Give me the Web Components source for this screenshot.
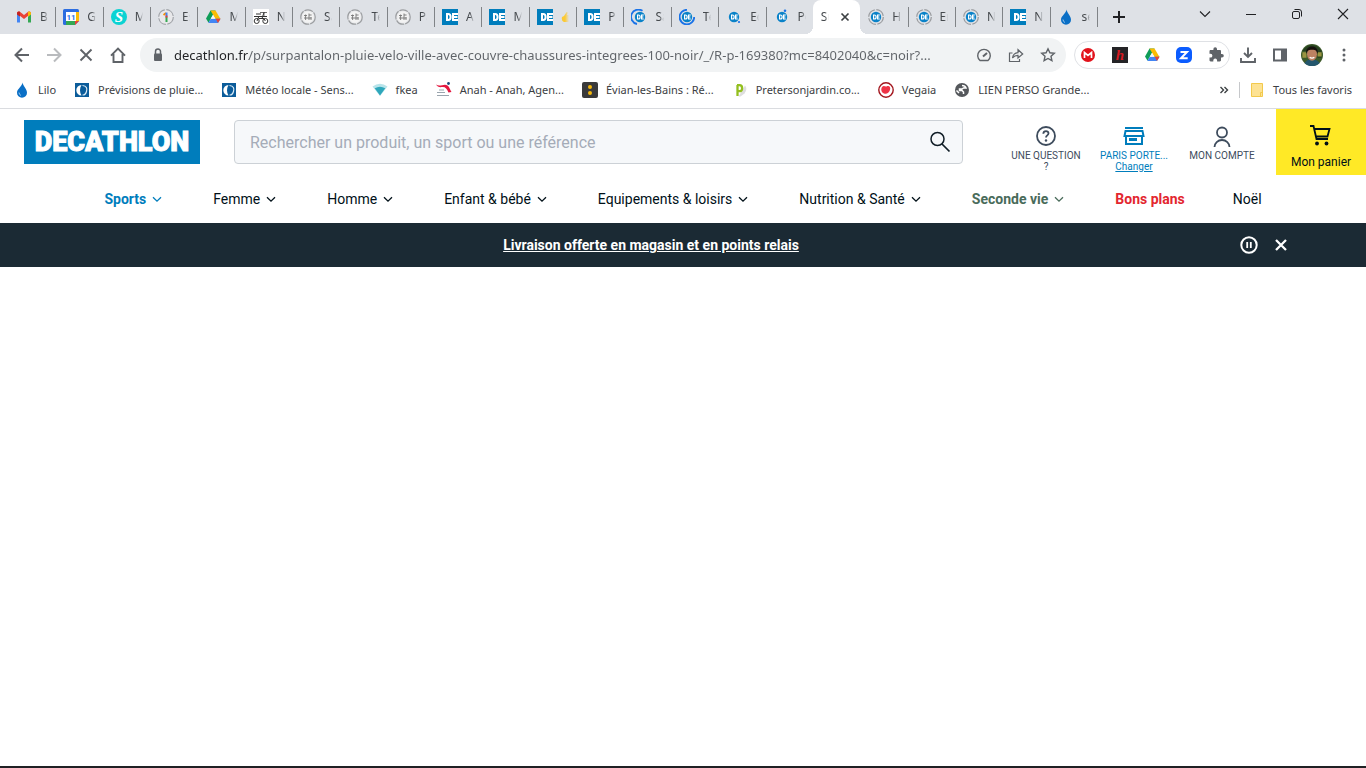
<!DOCTYPE html>
<html lang="fr">
<head>
<meta charset="utf-8">
<meta name="viewport" content="width=device-width, initial-scale=1">
<title>Surpantalon pluie vélo - Decathlon</title>
<style>
html, body{
	margin: 0;
	height: 100%;
}

body{
	display: flex;
	flex-direction: column;
	box-sizing: border-box;
	min-height: 100vh;
	background-color: #fff;
	border-bottom: 2px solid #202124;
	font-family: 'Roboto', sans-serif;
	color: #001018;
}

main{
	flex: 1;
}
</style>
</head>
<body>

<template id='tab-strip-template'>
<style>
:host{
	display: flex;
	height: 34px;
	padding-left: 8px;
	background-color: #dee1e6;
	font-family: 'Noto Sans', sans-serif;
}

.tabs{
	display: flex;
	flex: 1;
	min-width: 0;
}

.new{
	align-self: center;
	height: 28px;
	width: 28px;
	margin: 0 49px 0 8px;
}

.win{
	width: 46px;
	height: 28px;
}

button{
	display: flex;
	flex: none;
	align-items: center;
	justify-content: center;
	padding: 0;
	border: none;
	background: none;
	color: #202124;
}
</style>
<div class='tabs' role='tablist'><slot></slot></div>
<button class='new' aria-label='Nouvel onglet'><ui-icon name='plus'></ui-icon></button>
<button class='win' aria-label='Rechercher dans les onglets'><ui-icon name='tabsearch'></ui-icon></button>
<button class='win' aria-label='Réduire'><ui-icon name='minimize'></ui-icon></button>
<button class='win' aria-label='Restaurer'><ui-icon name='restore'></ui-icon></button>
<button class='win' aria-label='Fermer'><ui-icon name='winclose'></ui-icon></button>
</template>

<template id='browser-tab-template'>
<style>
:host{
	display: flex;
	flex: 1 1 0;
	align-items: center;
	box-sizing: border-box;
	min-width: 0;
	position: relative;
	padding: 0 7px 0 8px;
	gap: 8px;
	font-size: 12px;
	line-height: 16px;
	color: #45494d;
}

/* separator on the right of each idle tab */
:host::after{
	content: '';
	position: absolute;
	right: -1px;
	top: 7px;
	width: 1px;
	height: 20px;
	background-color: #808387;
}

:host([plain])::after, :host([active])::after{
	display: none;
}

.label{
	flex: 1;
	min-width: 0;
	overflow: hidden;
	white-space: nowrap;
	-webkit-mask-image: linear-gradient(to right, #000 50%, transparent);
	mask-image: linear-gradient(to right, #000 50%, transparent);
}

button{
	display: none;
	padding: 0;
	border: none;
	background: none;
	color: #3c4043;
}

:host([active]){
	background-color: #fff;
	border-radius: 8px 8px 0 0;
}

:host([active]) button{
	display: flex;
}

:host([active]) ui-icon.fav{
	display: none;
}

/* curved feet of the active tab */
.foot{
	display: none;
	position: absolute;
	bottom: 0;
	width: 8px;
	height: 8px;
}

:host([active]) .foot{
	display: block;
}

.foot.l{
	left: -8px;
	background: radial-gradient(circle at 0 0, transparent 8px, #fff 8px);
}

.foot.r{
	right: -8px;
	background: radial-gradient(circle at 100% 0, transparent 8px, #fff 8px);
}
</style>
<ui-icon class='fav'></ui-icon>
<span class='label'><slot></slot></span>
<button aria-label="Fermer l'onglet"><ui-icon name='tabclose'></ui-icon></button>
<i class='foot l'></i><i class='foot r'></i>
</template>

<template id='tool-bar-template'>
<style>
:host{
	display: flex;
	align-items: center;
	height: 42px;
	padding: 0 6px;
	background-color: #fff;
	color: #5f6368;
}

button{
	display: flex;
	flex: none;
	align-items: center;
	justify-content: center;
	width: 32px;
	height: 28px;
	padding: 0;
	border: none;
	background: none;
	color: inherit;
}

button:disabled{
	color: #b9bbbe;
}

.omni{
	display: flex;
	flex: 1;
	align-items: center;
	height: 34px;
	min-width: 0;
	margin: 0 8px 0 6px;
	padding: 0 2px 0 10px;
	border-radius: 17px;
	background-color: #f1f3f4;
}

.omni input{
	flex: 1;
	min-width: 0;
	margin-left: 8px;
	padding: 0;
	border: none;
	outline: none;
	font: 13px/20px 'Noto Sans', sans-serif;
	/* host name darker than the path */
	color: transparent;
	background: linear-gradient(to right, #202124 75px, #5f6368 75px);
	-webkit-background-clip: text;
	background-clip: text;
}

.ext{
	display: flex;
	flex: none;
	box-sizing: border-box;
	height: 28px;
	width: 156px;
	margin-right: 2px;
	justify-content: center;
	align-items: center;
	border: 1px solid #dfe1e5;
	border-radius: 14px;
}

.ext button{
	height: 26px;
}
</style>
<button aria-label='Précédent'><ui-icon name='back'></ui-icon></button>
<button aria-label='Suivant' disabled><ui-icon name='forward'></ui-icon></button>
<button aria-label='Arrêter'><ui-icon name='stop'></ui-icon></button>
<button aria-label='Accueil'><ui-icon name='home'></ui-icon></button>
<div class='omni'>
	<ui-icon name='lock'></ui-icon>
	<input type='text' aria-label='Adresse' value='decathlon.fr/p/surpantalon-pluie-velo-ville-avec-couvre-chaussures-integrees-100-noir/_/R-p-169380?mc=8402040&amp;c=noir?...'>
	<button aria-label='Performance'><ui-icon name='gauge'></ui-icon></button>
	<button aria-label='Partager'><ui-icon name='share'></ui-icon></button>
	<button aria-label='Favori'><ui-icon name='star'></ui-icon></button>
</div>
<div class='ext'>
	<button aria-label='Mega'><ui-icon name='mega'></ui-icon></button>
	<button aria-label='Honey'><ui-icon name='hletter'></ui-icon></button>
	<button aria-label='Drive'><ui-icon name='drive'></ui-icon></button>
	<button aria-label='Zoom'><ui-icon name='zletter'></ui-icon></button>
	<button aria-label='Extensions'><ui-icon name='puzzle'></ui-icon></button>
</div>
<button aria-label='Téléchargements'><ui-icon name='download'></ui-icon></button>
<button aria-label='Panneau latéral'><ui-icon name='panel'></ui-icon></button>
<button aria-label='Profil'><ui-icon name='avatar' size='22'></ui-icon></button>
<button aria-label='Menu'><ui-icon name='dots'></ui-icon></button>
</template>

<template id='bookmark-bar-template'>
<style>
:host{
	display: flex;
	align-items: center;
	box-sizing: border-box;
	height: 33px;
	padding: 0 14px 4px;
	border-bottom: 1px solid #dadce0;
	background-color: #fff;
	font-family: 'Noto Sans', sans-serif;
}

.items{
	display: flex;
	flex: 1;
	gap: 18px;
	min-width: 0;
	overflow: hidden;
}

.end{
	display: flex;
	align-items: center;
	height: 16px;
	padding-left: 9px;
	margin-left: 6px;
	border-left: 1px solid #c6c8cb;
}

button{
	display: flex;
	padding: 0;
	border: none;
	background: none;
	color: #3c4043;
}
</style>
<div class='items'><slot></slot></div>
<button aria-label='Autres favoris'><ui-icon name='more'></ui-icon></button>
<div class='end'><slot name='end'></slot></div>
</template>

<template id='book-mark-template'>
<style>
:host{
	display: block;
	flex: none;
}

a{
	display: flex;
	align-items: center;
	gap: 8px;
	font-size: 11px;
	line-height: 16px;
	white-space: nowrap;
	text-decoration: none;
	color: #3c4043;
}
</style>
<a href='#'><ui-icon></ui-icon><slot></slot></a>
</template>

<template id='shop-header-template'>
<style>
:host{
	display: flex;
	align-items: flex-start;
	height: 66px;
	padding-left: 24px;
	background-color: #fff;
}

.logo{
	display: flex;
	flex: none;
	align-items: center;
	justify-content: center;
	width: 176px;
	height: 44px;
	margin: 11px 34px 0 0;
	background-color: #007dbc;
	color: #fff;
	font-size: 27px;
	font-weight: 900;
	line-height: 44px;
	text-decoration: none;
	-webkit-text-stroke: 1px #fff;
}

.search{
	display: flex;
	flex: 1;
	box-sizing: border-box;
	height: 44px;
	min-width: 0;
	margin: 11px 39px 0 0;
	border: 1px solid #ccd1d6;
	border-radius: 4px;
	background-color: #f6f8fa;
}

.search input{
	flex: 1;
	min-width: 0;
	padding: 2px 15px 0;
	border: none;
	outline: none;
	background: none;
	font: 16px/24px 'Roboto', sans-serif;
	color: #001018;
}

.search input::placeholder{
	color: #a5acb8;
	opacity: 1;
}

.search button{
	display: flex;
	align-items: center;
	justify-content: center;
	width: 44px;
	padding: 0;
	border: none;
	background: none;
	color: #101d26;
}

.links{
	display: flex;
	flex: none;
	margin-right: 10px;
}
</style>
<a class='logo' href='#'>DECATHLON</a>
<form class='search' role='search'>
	<input type='text' aria-label='Rechercher' placeholder='Rechercher un produit, un sport ou une référence'>
	<button type='button' aria-label='Lancer la recherche'><ui-icon name='search' size='24'></ui-icon></button>
</form>
<div class='links'><slot></slot></div>
<slot name='cart'></slot>
</template>

<template id='header-link-template'>
<style>
:host{
	display: block;
	width: 88px;
	--ink: #3e4c5d;
}

:host([blue]){
	--ink: #007dbc;
}

a{
	display: flex;
	flex-direction: column;
	align-items: center;
	padding: 15px 8px 0;
	font-size: 10px;
	line-height: 11px;
	text-align: center;
	text-decoration: none;
	color: var(--ink);
}

ui-icon{
	margin-bottom: 2px;
}

:host([cart]){
	width: 90px;
	background-color: #ffe926;
	--ink: #001018;
}

:host([cart]) a{
	height: 66px;
	box-sizing: border-box;
	padding: 14px 0 0;
	font-size: 12px;
	line-height: 14px;
}

:host([cart]) ui-icon{
	margin-bottom: 8px;
}
</style>
<a href='#'><ui-icon size='24'></ui-icon><span><slot></slot></span></a>
</template>

<template id='shop-nav-template'>
<style>
nav{
	display: flex;
	justify-content: center;
	align-items: center;
	gap: 48px;
	height: 48px;
	background-color: #fff;
}
</style>
<nav><slot></slot></nav>
</template>

<template id='nav-item-template'>
<style>
:host{
	display: block;
}

a{
	display: flex;
	align-items: center;
	gap: 3px;
	font-size: 14px;
	line-height: 20px;
	white-space: nowrap;
	text-decoration: none;
	color: var(--nav-color, #001018);
	font-weight: var(--nav-weight, 400);
}

:host([plain]) ui-icon{
	display: none;
}
</style>
<a href='#'><slot></slot><ui-icon name='chevron'></ui-icon></a>
</template>

<template id='promo-banner-template'>
<style>
:host{
	display: flex;
	align-items: center;
	height: 44px;
	padding: 0 69px;
	background-color: #1b2a34;
	color: #fff;
}

p{
	flex: 1;
	margin: 0;
	text-align: center;
	font-size: 14px;
	line-height: 20px;
}

a{
	color: #fff;
	font-weight: 700;
}

button{
	display: flex;
	align-items: center;
	justify-content: center;
	width: 32px;
	height: 32px;
	padding: 0;
	border: none;
	background: none;
	color: #fff;
}
</style>
<p><a href='#'><slot></slot></a></p>
<button aria-label='Pause'><ui-icon name='pause' size='20'></ui-icon></button>
<button aria-label='Fermer'><ui-icon name='close' size='20'></ui-icon></button>
</template>

<tab-strip>
	<browser-tab icon='gmail'>Bo</browser-tab>
	<browser-tab icon='calendar'>G</browser-tab>
	<browser-tab icon='sround'>M</browser-tab>
	<browser-tab icon='one'>Es</browser-tab>
	<browser-tab icon='drive'>M</browser-tab>
	<browser-tab icon='bike'>N</browser-tab>
	<browser-tab icon='bikering'>Sa</browser-tab>
	<browser-tab icon='bikering'>Te</browser-tab>
	<browser-tab icon='bikering'>Pa</browser-tab>
	<browser-tab icon='de'>A</browser-tab>
	<browser-tab icon='de'>M</browser-tab>
	<browser-tab icon='de'><ui-icon name='thumb'></ui-icon></browser-tab>
	<browser-tab icon='de'>Po</browser-tab>
	<browser-tab icon='load1'>Sa</browser-tab>
	<browser-tab icon='load2'>Te</browser-tab>
	<browser-tab icon='load3'>Ec</browser-tab>
	<browser-tab icon='load4' plain>Po</browser-tab>
	<browser-tab active>Su</browser-tab>
	<browser-tab icon='dering'>H</browser-tab>
	<browser-tab icon='dering'>En</browser-tab>
	<browser-tab icon='dering'>N</browser-tab>
	<browser-tab icon='de'>N</browser-tab>
	<browser-tab icon='drop'>se</browser-tab>
</tab-strip>

<tool-bar></tool-bar>

<bookmark-bar>
	<book-mark icon='drop'>Lilo</book-mark>
	<book-mark icon='meteo'>Prévisions de pluie...</book-mark>
	<book-mark icon='meteo'>Météo locale - Sens...</book-mark>
	<book-mark icon='fan'>fkea</book-mark>
	<book-mark icon='anah'>Anah - Anah, Agen...</book-mark>
	<book-mark icon='evian'>Évian-les-Bains : Ré...</book-mark>
	<book-mark icon='pletter'>Pretersonjardin.co...</book-mark>
	<book-mark icon='vegaia'>Vegaia</book-mark>
	<book-mark icon='globe'>LIEN PERSO Grande...</book-mark>
	<book-mark slot='end' icon='folder'>Tous les favoris</book-mark>
</bookmark-bar>

<shop-header>
	<header-link icon='question'>UNE QUESTION ?</header-link>
	<header-link icon='store' blue>PARIS PORTE...<br><u>Changer</u></header-link>
	<header-link icon='user'>MON COMPTE</header-link>
	<header-link slot='cart' icon='cart' cart>Mon panier</header-link>
</shop-header>

<shop-nav>
	<nav-item style='--nav-color: #007dbc; --nav-weight: 700'>Sports</nav-item>
	<nav-item>Femme</nav-item>
	<nav-item>Homme</nav-item>
	<nav-item>Enfant &amp; bébé</nav-item>
	<nav-item>Equipements &amp; loisirs</nav-item>
	<nav-item>Nutrition &amp; Santé</nav-item>
	<nav-item style='--nav-color: #496b5a; --nav-weight: 700'>Seconde vie</nav-item>
	<nav-item plain style='--nav-color: #e3262f; --nav-weight: 700'>Bons plans</nav-item>
	<nav-item plain>Noël</nav-item>
</shop-nav>

<promo-banner>Livraison offerte en magasin et en points relais</promo-banner>

<main></main>

<script>
/*Every icon is drawn in a 16 box unless it is listed with its own box size*/
const line = 'fill="none" stroke="currentColor"';

const bikeLines = '<g fill="none" stroke="#777" stroke-width=".9"><path d="M4 6.5h3M5.6 11V5.5M4 9h7.5M9 4.5v6.5M9 6h2.6M11 8v3"/></g>';

const deBadge = '<circle cx="8" cy="8" r="5.2" fill="#0a82c8"/><path d="M5.6 6v4h.8c2.3 0 2.3-4 0-4zM11.8 6H9.6v4h2.2M9.6 8h1.8" fill="none" stroke="#fff" stroke-width="1.2"/>';

const icons = {
	plus: `<path d="M8 2v12M2 8h12" ${line} stroke-width="2"/>`,
	tabsearch: `<path d="M3 5.500l5 5 5-5" ${line} stroke-width="1.1"/>`,
	minimize: `<path d="M3 8.500h10" ${line}/>`,
	restore: `<rect x="3.5" y="5.5" width="7" height="7" rx="1.5" ${line}/><path d="M5.500 3.500h4.500a2.500 2.500 0 0 1 2.500 2.500v4.500" ${line}/>`,
	winclose: `<path d="M3 3l10 10M13 3L3 13" ${line} stroke-width="1.1"/>`,
	tabclose: `<path d="M4.500 4.500l7 7M11.500 4.500l-7 7" ${line} stroke-width="1.7"/>`,
	back: `<path d="M15 8H2M8 1.500L1.500 8 8 14.500" ${line} stroke-width="2"/>`,
	forward: `<path d="M1 8h13M8 1.500L14.500 8 8 14.500" ${line} stroke-width="2"/>`,
	stop: `<path d="M2.500 2.500l11 11M13.500 2.500l-11 11" ${line} stroke-width="1.9"/>`,
	home: `<path d="M1 8.700L8 1.500l7 7.200M3.500 7v8h9V7" ${line} stroke-width="1.9"/>`,
	lock: `<path d="M5.500 7V4.500a2.500 2.500 0 0 1 5 0V7" ${line} stroke-width="1.5"/><rect x="4" y="6.5" width="8" height="7.5" rx="1" fill="currentColor"/>`,
	gauge: `<path d="M4 13.500a6.300 6.300 0 1 1 8 0z" ${line} stroke-width="1.4"/><path d="M7 9.500L11 6" ${line} stroke-width="2"/>`,
	share: `<path d="M4.500 6H1.500v8.500h10V12" ${line} stroke-width="1.2"/><path d="M4.500 11c.5-3.500 2.500-5.200 5.500-5.400V2.700L14.700 7 10 11V8.300c-2.500 0-4 .7-5.500 2.700z" ${line} stroke-width="1.2"/>`,
	star: `<path d="M8 1.800l1.900 4 4.400.5-3.300 3 .9 4.400L8 11.500l-3.900 2.200.9-4.400-3.300-3 4.400-.5z" ${line} stroke-width="1.4"/>`,
	puzzle: '<path d="M14 7h-1V4.200c0-.7-.5-1.200-1.200-1.200H9V2a1.800 1.800 0 0 0-3.600 0v1H2.700C2 3 1.500 3.500 1.500 4.200v2.600h1a1.900 1.900 0 0 1 0 3.800h-1v2.700c0 .7.5 1.200 1.200 1.200h2.600v-1a1.900 1.900 0 0 1 3.800 0v1h2.700c.7 0 1.200-.5 1.200-1.200v-2.700h1A1.800 1.800 0 0 0 14 7z" fill="currentColor"/>',
	download: `<path d="M8 .5v9M4 6l4 4 4-4M1 11v4h14v-4" ${line} stroke-width="1.9"/>`,
	panel: `<path d="M2 2.500h12v11H2z" ${line} stroke-width="2"/><path d="M9 2.500h5v11H9z" fill="currentColor"/>`,
	dots: '<g fill="currentColor"><circle cx="8" cy="3" r="1.5"/><circle cx="8" cy="8" r="1.5"/><circle cx="8" cy="13" r="1.5"/></g>',
	more: `<path d="M3.500 5l3 3-3 3M7.500 5l3 3-3 3" ${line} stroke-width="1.4"/>`,
	avatar: '<circle cx="8" cy="8" r="8" fill="#3d5a2a"/><path d="M1 5a8 8 0 0 1 14 0v5h-3L9 5H3z" fill="#26401f"/><path d="M1 10h3v-4H1zM12 6h3v3h-3z" fill="#9a9440"/><path d="M2.600 14C4 11.500 6 11 8 11s4.500.7 5.500 3A8 8 0 0 1 2.600 14z" fill="#24566d"/><ellipse cx="8" cy="7.5" rx="3.6" ry="4.6" fill="#bd8262"/><path d="M3.800 7.500C2.500 0 13.500 0 12.200 7.500 11.500 5 11 4.200 8 4.200S4.500 5 3.800 7.500z" fill="#16100d"/><path d="M6.300 9.700q1.700 1.200 3.400 0" fill="none" stroke="#fff" stroke-width=".9"/>',
	mega: '<circle cx="8" cy="8" r="7" fill="#e2121b"/><path d="M4.500 11V5.500L8 8.500l3.500-3V11" fill="none" stroke="#fff" stroke-width="1.7"/>',
	hletter: '<path d="M0 0h16v16H0z" fill="#242427"/><text x="8" y="13" text-anchor="middle" font-family="Liberation Serif, serif" font-style="italic" font-weight="700" font-size="15" fill="#d71920">h</text>',
	zletter: '<rect width="16" height="16" rx="5" fill="#0b5cff"/><path d="M4.500 5h6.500l-6 6.200h6.700" fill="none" stroke="#fff" stroke-width="2"/>',

	gmail: '<path d="M1 4v9.500h3V7.500z" fill="#4285f4"/><path d="M15 4v9.500h-3V7.500z" fill="#34a853"/><path d="M1 4.500C1 2.500 3 2 4.200 3L8 6l3.800-3C13 2 15 2.500 15 4.500L8 10z" fill="#ea4335"/><path d="M12 2.900c1.500-1 3 0 3 1.600v1L12 7.700z" fill="#fbbc04"/><path d="M4 2.900C2.500 1.900 1 3 1 4.500v1L4 7.700z" fill="#c5221f"/>',
	calendar: '<path d="M0 1.500Q0 0 1.500 0h13Q16 0 16 1.500V12l-4 4H1.500Q0 16 0 14.500z" fill="#2c6de0"/><path d="M13 3h3v9h-3z" fill="#fbbc04"/><path d="M3 12h9v4H3z" fill="#34a853"/><path d="M12 12h4l-4 4z" fill="#ea4335"/><path d="M3 3h10v9H3z" fill="#fff"/><text x="8" y="10.7" text-anchor="middle" font-family="Roboto, sans-serif" font-weight="700" font-size="8" fill="#1a73e8">11</text>',
	sround: '<circle cx="8" cy="8" r="8" fill="#0bd3d3"/><text x="8" y="13" text-anchor="middle" font-family="Liberation Serif, serif" font-weight="700" font-style="italic" font-size="15" fill="#fff">S</text>',
	one: '<circle cx="8" cy="8" r="7.3" fill="#e8e8ea" stroke="#a0a3a8" stroke-width="1.2" stroke-dasharray="10 1.5"/><path d="M5.500 6l2.500-2" fill="none" stroke="#fb8c00" stroke-width="1.8"/><path d="M8.500 3.500V8" stroke="#4285f4" stroke-width="2"/><path d="M8.500 8v5" stroke="#34a853" stroke-width="2"/><path d="M8.500 6.500v2" stroke="#ea4335" stroke-width="2"/>',
	drive: '<path d="M5.500 1.500h5L8 6 3.500 13.800 1 9.500z" fill="#0f9d58"/><path d="M5.500 1.500h5L15.500 10h-5z" fill="#fbbc04"/><path d="M5.900 9.700h9.600L13 14H3.300z" fill="#4285f4"/><path d="M15.500 9.700h-4.800L13 14z" fill="#ea4335"/><path d="M8 5.800L5.700 9.800h4.600z" fill="#f4f6f9"/>',
	bike: '<path d="M0 0h16v16H0z" fill="#fff"/><g fill="none" stroke="#333"><circle cx="3.7" cy="12" r="2.5"/><circle cx="12.3" cy="12" r="2.5"/><path d="M1 7.500h13M4 12l2-5M6 9.500h5l1.300 2.500M9 9.500L11 3.500M3 5h5" stroke-width="1"/><path d="M7 3.500h7M11 3v5" stroke-width=".7"/></g>',
	bikering: '<circle cx="8" cy="8" r="7.2" fill="#e9eaec" stroke="#9b9da0" stroke-width="1.2" stroke-dasharray="9 1"/><circle cx="8" cy="8" r="5.5" fill="#f3f3f3"/>' + bikeLines,
	de: '<path d="M0 0h16v16H0z" fill="#007dbc"/><path d="M5 5v6h1.200C9.400 11 9.400 5 6.200 5zM16 5h-5v6h5M11 8h4.500" fill="none" stroke="#fff" stroke-width="2"/>',
	thumb: '<path d="M3 7l2-3c1-2 2-1 1.500 1L6 6h4v7H3Q0 12 1 8z" fill="#fcc934"/>',
	load1: '<g transform="translate(1 0)">' + deBadge + '</g><path d="M11.500 1.800A7.300 7.300 0 1 0 6 15" fill="none" stroke="#1a73e8" stroke-width="1.8"/>',
	load2: deBadge + '<path d="M8 .8A7.300 7.300 0 1 0 15.200 8" fill="none" stroke="#1a73e8" stroke-width="1.8"/>',
	load3: deBadge + '<circle cx="13" cy="13" r="1.1" fill="#1a73e8"/>',
	load4: deBadge + '<circle cx="11" cy="1.8" r="1.3" fill="#1a73e8"/>',
	dering: '<circle cx="8" cy="8" r="7.3" fill="none" stroke="#9b9da0" stroke-width="1.3" stroke-dasharray="10 1.5"/>' + deBadge,
	drop: '<path d="M8.500.5C9 4 13 7 13 10.700a5 5 0 0 1-10 0C3 7 8 4.500 8.500.5z" fill="#0a6fc6"/><path d="M5 10.500a3.400 3.400 0 0 0 2 3" fill="none" stroke="#9cc8ec"/>',

	meteo: '<path d="M1 1h14v14H1z" fill="#0b5c9a"/><path d="M7.500 3A5 5 0 0 0 7.500 13.400C5.500 10.500 5.500 6 7.500 3z" fill="#fff"/><path d="M8.500 3.500c4 .3 5 3 4 6-.7 2.500-2.300 3.600-4 3.500" fill="none" stroke="#dcecf6" stroke-width="1.2"/>',
	fan: '<path d="M.5 4.500Q8-1 15.500 4.500L8 14z" fill="#b8e4ea"/><path d="M2.700 6.300Q8 3 13.300 6.300L8 13.500z" fill="#2fa7bb"/>',
	anah: '<path d="M0 2.500c4 3 8-1.500 11.500 1 2 1.500 2.500 4 4 6.500l-3 .5C11 6.500 9 4.500 6 5 3.500 5.500 1 4.500 0 2.500z" fill="#e4173f"/><circle cx="12.5" cy="1.5" r="1.4" fill="#1c4a7c"/><path d="M3 8h5M1 10.500h8M1 13.500h12" stroke="#9aa5ae" stroke-width="1.2"/>',
	evian: '<rect width="16" height="16" rx="2" fill="#3a3a3a"/><circle cx="8" cy="5" r="2" fill="#f5b80a"/><circle cx="8" cy="11" r="2" fill="#f5b80a"/>',
	pletter: '<path d="M6.500 14.500h2l4-3q3.500-5 .5-8z" fill="#dedede"/><path d="M5.500 14V3M5 3.200h2.500c3.500 0 3.500 6 0 6H6" fill="none" stroke="#93bf1f" stroke-width="2.3"/>',
	vegaia: '<circle cx="8" cy="8" r="7.2" fill="#fff" stroke="#a3161e" stroke-width="1.4"/><path d="M4 5c2-2 3 0 4.500-.5C11 3 13 5 12 8c-1 3-3.500 4.500-6 3.500S2.500 7.500 4 5z" fill="#ee3346"/>',
	globe: '<circle cx="8" cy="8" r="7" fill="#55585c"/><path d="M8 3.500c2 0 3.500 1 4 2.500H9.500L8 7H5.500v1.500H8l1.500 1.500v2M2.500 8.500L5 11" fill="none" stroke="#fff" stroke-width="1.5"/>',
	folder: '<path d="M2.500 1.500h11v13h-11z" fill="#fde293" stroke="#f2c94c"/><path d="M11.500 14.500v-4h2.500" fill="none" stroke="#f2c94c"/>',

	chevron: `<path d="M4 6.200l4 4 4-4" ${line} stroke-width="1.3"/>`,
	search: [24, `<circle cx="9.5" cy="9" r="6.5" ${line} stroke-width="1.5"/><path d="M14 14l7.500 7.500" ${line} stroke-width="1.7"/>`],
	question: [24, `<circle cx="12" cy="12" r="9" ${line} stroke-width="1.8"/><path d="M9.300 9.800c.2-3.600 5.400-3.300 5.200-.3-.1 1.900-2.500 1.900-2.500 4" ${line} stroke-width="1.8"/><circle cx="12" cy="16.5" r="1.2" fill="currentColor"/>`],
	store: [24, `<path d="M3 4h18M3.500 7h17l1 5h-19zM4 12v8h16v-8" ${line} stroke-width="2"/><path d="M7 14h8v3H7z" fill="currentColor"/>`],
	user: [24, `<circle cx="12" cy="8.500" r="5" ${line} stroke-width="1.8"/><path d="M4.500 23a7.500 7 0 0 1 15 0" ${line} stroke-width="1.8"/>`],
	cart: [24, `<path d="M1 3h3.500L7.500 16h11.500M5.500 6h15l-2 7.500H7" ${line} stroke-width="1.8"/><circle cx="8" cy="20.500" r="1.9" fill="currentColor"/><circle cx="17.5" cy="20.500" r="1.9" fill="currentColor"/>`],
	pause: [20, `<circle cx="10" cy="10" r="7.7" ${line} stroke-width="2"/><path d="M8.200 7v6M11.800 7v6" ${line} stroke-width="1.8"/>`],
	close: [20, `<path d="M5 5l10 10M15 5L5 15" ${line} stroke-width="2.3"/>`]
};

class UiIcon extends HTMLElement {
	constructor() {
		super();
		this.attachShadow({mode: 'open'});
	}
	static get observedAttributes() {
		return ['name', 'size'];
	}
	attributeChangedCallback() {
		const icon = icons[this.getAttribute('name')];
		if (!icon) return;
		const size = this.getAttribute('size') || 16;
		const box = Array.isArray(icon) ? icon[0] : 16;
		const body = Array.isArray(icon) ? icon[1] : icon;
		this.shadowRoot.innerHTML = `
		<style>
		:host{ display: inline-block; flex: none; width: ${size}px; height: ${size}px; vertical-align: top; }
		svg{ display: block; width: 100%; height: 100%; }
		</style>
		<svg viewBox="0 0 ${box} ${box}" aria-hidden="true">${body}</svg>`;
	}
}

/*Clones the template of the same name into the shadow root. If the
element has an icon attribute it is handed to the first icon inside*/
class PageElement extends HTMLElement {
	constructor() {
		super();
		const shadowRoot = this.attachShadow({mode: 'open'});
		const template = document.querySelector('#' + this.localName + '-template');
		shadowRoot.appendChild(template.content.cloneNode(true));
	}
	connectedCallback() {
		if (this.hasAttribute('icon')) {
			this.shadowRoot.querySelector('ui-icon').setAttribute('name', this.getAttribute('icon'));
		}
	}
}

class TabStrip extends PageElement {}
class BrowserTab extends PageElement {}
class ToolBar extends PageElement {}
class BookmarkBar extends PageElement {}
class BookMark extends PageElement {}
class ShopHeader extends PageElement {}
class HeaderLink extends PageElement {}
class ShopNav extends PageElement {}
class NavItem extends PageElement {}
class PromoBanner extends PageElement {}

window.customElements.define('ui-icon', UiIcon);
window.customElements.define('tab-strip', TabStrip);
window.customElements.define('browser-tab', BrowserTab);
window.customElements.define('tool-bar', ToolBar);
window.customElements.define('bookmark-bar', BookmarkBar);
window.customElements.define('book-mark', BookMark);
window.customElements.define('shop-header', ShopHeader);
window.customElements.define('header-link', HeaderLink);
window.customElements.define('shop-nav', ShopNav);
window.customElements.define('nav-item', NavItem);
window.customElements.define('promo-banner', PromoBanner);
</script>
</body>
</html>
